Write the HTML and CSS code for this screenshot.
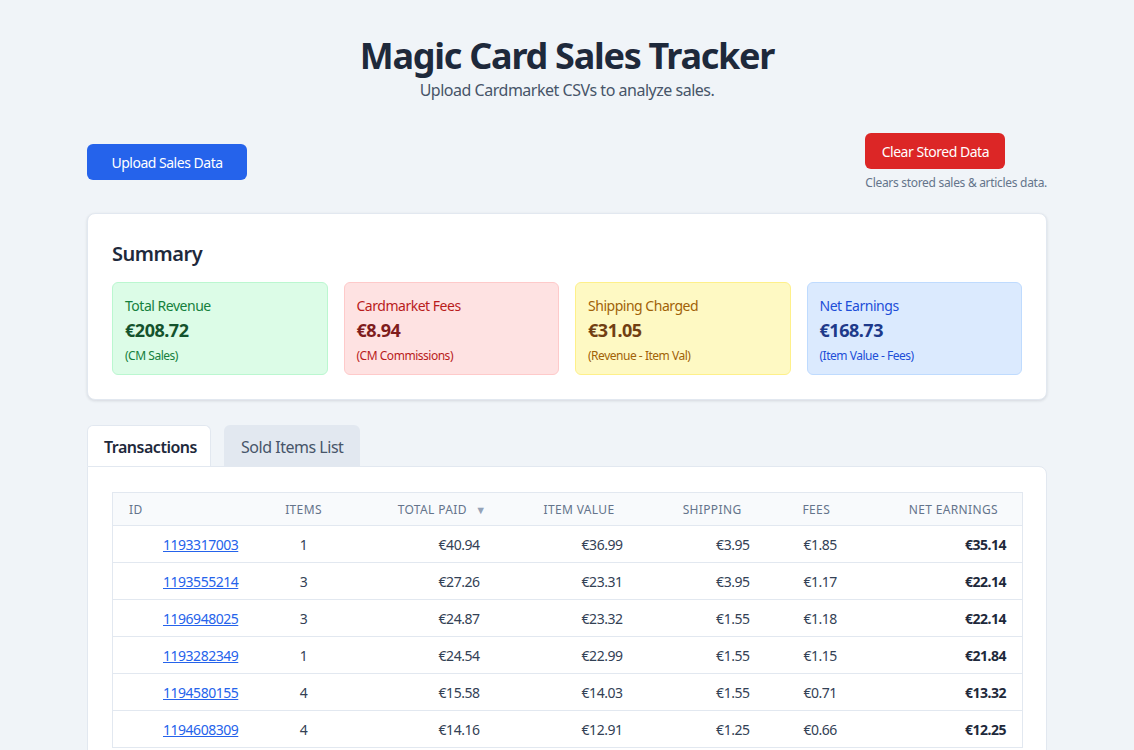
FILE: index.html
```html
<!DOCTYPE html>
<html lang="en">
<head>
<meta charset="utf-8">
<title>Magic Card Sales Tracker</title>
<link rel="stylesheet" href="styles.css">
</head>
<body>
<div class="container">
  <header class="page-header">
    <h1 class="title">Magic Card Sales Tracker</h1>
    <p class="subtitle">Upload Cardmarket CSVs to analyze sales.</p>
  </header>

  <div class="actions">
    <button class="btn btn-blue">Upload Sales Data</button>
    <div class="clear-group">
      <button class="btn btn-red">Clear Stored Data</button>
      <span class="hint">Clears stored sales &amp; articles data.</span>
    </div>
  </div>

  <section class="summary">
    <h2 class="summary-title">Summary</h2>
    <div class="stats">
      <div class="stat stat-green">
        <div class="stat-label">Total Revenue</div>
        <div class="stat-value">€208.72</div>
        <div class="stat-note">(CM Sales)</div>
      </div>
      <div class="stat stat-red">
        <div class="stat-label">Cardmarket Fees</div>
        <div class="stat-value">€8.94</div>
        <div class="stat-note">(CM Commissions)</div>
      </div>
      <div class="stat stat-yellow">
        <div class="stat-label">Shipping Charged</div>
        <div class="stat-value">€31.05</div>
        <div class="stat-note">(Revenue - Item Val)</div>
      </div>
      <div class="stat stat-blue">
        <div class="stat-label">Net Earnings</div>
        <div class="stat-value">€168.73</div>
        <div class="stat-note">(Item Value - Fees)</div>
      </div>
    </div>
  </section>

  <div class="tabs">
    <button class="tab tab-active">Transactions</button>
    <button class="tab">Sold Items List</button>
  </div>

  <section class="panel">
    <table class="tx">
      <colgroup>
        <col class="c-id"><col class="c-items"><col class="c-total"><col class="c-value"><col class="c-ship"><col class="c-fees"><col class="c-net">
      </colgroup>
      <thead>
        <tr>
          <th class="h-id">ID</th>
          <th class="h-items">Items</th>
          <th class="h-total">Total Paid <span class="sort">▼</span></th>
          <th class="h-right">Item Value</th>
          <th class="h-right">Shipping</th>
          <th class="h-fees">Fees</th>
          <th class="h-right">Net Earnings</th>
        </tr>
      </thead>
      <tbody>
        <tr><td class="d-id"><a href="#">1193317003</a></td><td class="d-items">1</td><td class="d-right">€40.94</td><td class="d-right">€36.99</td><td class="d-right">€3.95</td><td class="d-fees">€1.85</td><td class="d-right d-net">€35.14</td></tr>
        <tr><td class="d-id"><a href="#">1193555214</a></td><td class="d-items">3</td><td class="d-right">€27.26</td><td class="d-right">€23.31</td><td class="d-right">€3.95</td><td class="d-fees">€1.17</td><td class="d-right d-net">€22.14</td></tr>
        <tr><td class="d-id"><a href="#">1196948025</a></td><td class="d-items">3</td><td class="d-right">€24.87</td><td class="d-right">€23.32</td><td class="d-right">€1.55</td><td class="d-fees">€1.18</td><td class="d-right d-net">€22.14</td></tr>
        <tr><td class="d-id"><a href="#">1193282349</a></td><td class="d-items">1</td><td class="d-right">€24.54</td><td class="d-right">€22.99</td><td class="d-right">€1.55</td><td class="d-fees">€1.15</td><td class="d-right d-net">€21.84</td></tr>
        <tr><td class="d-id"><a href="#">1194580155</a></td><td class="d-items">4</td><td class="d-right">€15.58</td><td class="d-right">€14.03</td><td class="d-right">€1.55</td><td class="d-fees">€0.71</td><td class="d-right d-net">€13.32</td></tr>
        <tr><td class="d-id"><a href="#">1194608309</a></td><td class="d-items">4</td><td class="d-right">€14.16</td><td class="d-right">€12.91</td><td class="d-right">€1.25</td><td class="d-fees">€0.66</td><td class="d-right d-net">€12.25</td></tr>
      </tbody>
    </table>
  </section>
</div>
</body>
</html>
```

FILE: styles.css
```css
* { box-sizing: border-box; }

html, body {
  margin: 0;
  padding: 0;
  background: #f0f4f8;
  font-family: "Noto Sans", "Open Sans", "Liberation Sans", sans-serif;
  letter-spacing: -0.03em;
  color: #334155;
}

html { scrollbar-width: none; }
body::-webkit-scrollbar { display: none; }

.container {
  max-width: 960px;
  margin: 0 auto;
  padding: 34px 0 24px;
}

.page-header {
  text-align: center;
}

.title {
  margin: 0;
  font-size: 36px;
  line-height: 43px;
  font-weight: 700;
  letter-spacing: -0.035em;
  color: #1e293b;
}

.subtitle {
  margin: 1px 0 0;
  font-size: 16px;
  line-height: 24px;
  color: #475569;
}

.actions {
  margin-top: 31px;
  display: flex;
  justify-content: space-between;
  align-items: center;
}

.btn {
  font-family: inherit;
  letter-spacing: inherit;
  white-space: nowrap;
  border: none;
  color: #fff;
  font-size: 14px;
  height: 36px;
  border-radius: 6px;
  padding: 0 16px;
  cursor: pointer;
}

.btn-blue {
  background: #2563eb;
  width: 160px;
}

.btn-red {
  background: #dc2626;
  width: 140px;
}

.clear-group {
  display: flex;
  flex-direction: column;
  align-items: flex-start;
  gap: 6px;
}

.hint {
  font-size: 12px;
  line-height: 16px;
  letter-spacing: -0.025em;
  color: #64748b;
}

.summary {
  margin-top: 22px;
  background: #fff;
  border: 1px solid #e2e8f0;
  border-radius: 8px;
  box-shadow: 0 1px 3px rgba(15, 23, 42, 0.12);
  padding: 24px;
}

.summary-title {
  margin: 2px 0 14px;
  font-size: 20px;
  line-height: 28px;
  font-weight: 600;
  color: #1e293b;
}

.stats {
  display: grid;
  grid-template-columns: repeat(4, 1fr);
  gap: 16px;
}

.stat {
  border: 1px solid;
  border-radius: 6px;
  padding: 13px 12px 10px;
}

.stat-label {
  font-size: 14px;
  line-height: 20px;
}

.stat-value {
  font-size: 18px;
  line-height: 28px;
  font-weight: 700;
}

.stat-note {
  margin-top: 4px;
  font-size: 12px;
  line-height: 16px;
}

.stat-green { background: #dcfce7; border-color: #bbf7d0; color: #15803d; }
.stat-green .stat-value { color: #14532d; }
.stat-red { background: #fee2e2; border-color: #fecaca; color: #b91c1c; }
.stat-red .stat-value { color: #7f1d1d; }
.stat-yellow { background: #fef9c3; border-color: #fef08a; color: #a16207; }
.stat-yellow .stat-value { color: #713f12; }
.stat-blue { background: #dbeafe; border-color: #bfdbfe; color: #1d4ed8; }
.stat-blue .stat-value { color: #1e3a8a; }

.tabs {
  margin-top: 25px;
  display: flex;
  gap: 13px;
}

.tab {
  font-family: inherit;
  letter-spacing: inherit;
  font-size: 16px;
  height: 41px;
  padding: 2px 17px 0;
  border: none;
  border-radius: 6px 6px 0 0;
  background: #e2e8f0;
  color: #475569;
  cursor: pointer;
}

.tab-active {
  background: #fff;
  color: #1e293b;
  font-weight: 600;
  border: 1px solid #e2e8f0;
  border-bottom: none;
  padding: 2px 13px 0 16px;
}

.panel {
  background: #fff;
  border: 1px solid #e2e8f0;
  border-radius: 0 8px 8px 8px;
  padding: 25px 24px 24px;
}

.tx {
  width: 100%;
  border-collapse: collapse;
  table-layout: fixed;
  border: 1px solid #e2e8f0;
  font-size: 14px;
}

.c-id { width: 154px; }
.c-items { width: 74px; }
.c-total { width: 155px; }
.c-value { width: 143px; }
.c-ship { width: 127px; }
.c-fees { width: 115px; }
.c-net { width: 142px; }

.tx thead tr {
  background: #f8fafc;
}

.tx th {
  height: 33px;
  font-size: 12px;
  font-weight: 400;
  text-transform: uppercase;
  letter-spacing: 0.03em;
  color: #64748b;
  border-bottom: 1px solid #e2e8f0;
  padding: 0;
}

.h-id { text-align: left; padding-left: 16px !important; }
.h-items { text-align: center; }
.h-total { text-align: right; padding-right: 9px !important; }
.h-right { text-align: right; padding-right: 24px !important; }
.h-fees { text-align: left; padding-left: 37px !important; }

.sort {
  color: #94a3b8;
  font-size: 11px;
  margin-left: 5px;
}

.tx td {
  height: 37px;
  padding: 0;
  border-bottom: 1px solid #e2e8f0;
  color: #334155;
}

.d-id { padding-left: 50px !important; }
.d-id a { color: #2563eb; text-decoration: underline; }
.d-items { text-align: center; }
.d-right { text-align: right; padding-right: 16px !important; }
.d-fees { padding-left: 38px !important; }
.d-net { font-weight: 700; color: #1e293b !important; }
```
